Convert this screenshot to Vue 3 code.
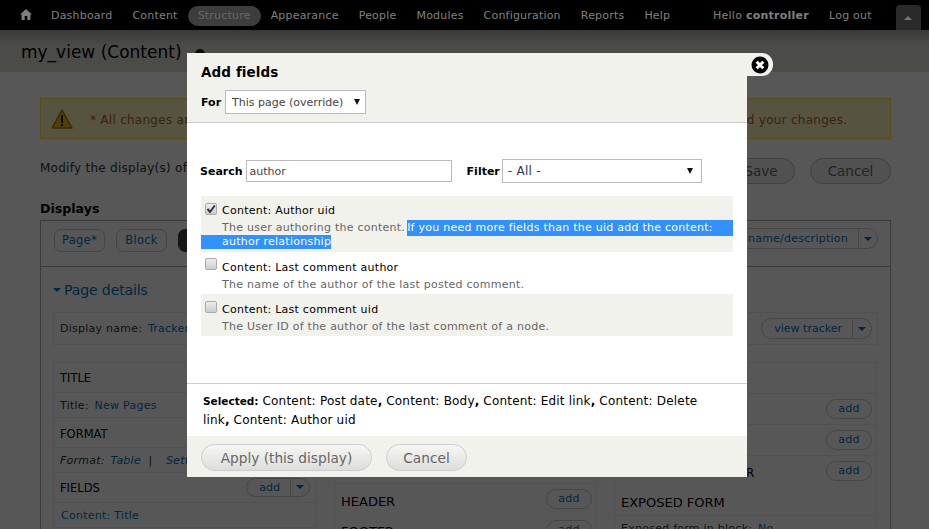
<script setup>
const navItems = [
  { label: 'Dashboard' },
  { label: 'Content' },
  { label: 'Structure', active: true },
  { label: 'Appearance' },
  { label: 'People' },
  { label: 'Modules' },
  { label: 'Configuration' },
  { label: 'Reports' },
  { label: 'Help' }
]

const otherFields = [
  { name: 'Content: Last comment author', desc: 'The name of the author of the last posted comment.' },
  { name: 'Content: Last comment uid', desc: 'The User ID of the author of the last comment of a node.', odd: true }
]
</script>

<template>
  <div class="page">
    <div class="toolbar">
      <svg class="home" width="12" height="11" viewBox="0 0 12 11">
        <path d="M6 0 L12 5.5 L10.4 5.5 L10.4 11 L7.3 11 L7.3 7 L4.7 7 L4.7 11 L1.6 11 L1.6 5.5 L0 5.5 Z" fill="#808080" />
      </svg>
      <nav class="nav">
        <a v-for="item in navItems" :key="item.label" :class="{ active: item.active }">{{ item.label }}</a>
      </nav>
      <div class="user">
        <span>Hello <b>controller</b></span>
        <span>Log out</span>
      </div>
      <div class="tray"><i></i></div>
    </div>

    <header class="head">
      <h1>my_view (Content)</h1>
      <span class="gear"></span>
    </header>

    <main class="content">
      <div class="warning">
        <svg width="22" height="20" viewBox="0 0 22 20">
          <path d="M11 1 L21 19 L1 19 Z" fill="#e8b820" stroke="#a88000" stroke-width="1.5" stroke-linejoin="round" />
          <rect x="10" y="6" width="2" height="8" fill="#222" />
          <rect x="10" y="15" width="2" height="2" fill="#222" />
        </svg>
        <span class="warning-text">* All changes are stored temporarily. Click Save to make your changes permanent. Click Cancel to discard your changes.</span>
      </div>

      <div class="actions">
        <span class="modify">Modify the display(s) of your view below or add new displays.</span>
        <div class="actions-btns">
          <span class="btn save">Save</span>
          <span class="btn cancel">Cancel</span>
        </div>
      </div>

      <h2>Displays</h2>
      <section class="displays">
        <div class="tabs">
          <a class="tab">Page*</a>
          <a class="tab">Block</a>
          <a class="tab dark">Tracker</a>
          <span class="spacer"></span>
          <span class="drop top-drop">edit view name/description<i class="sep"></i><i class="caret"></i></span>
        </div>
        <div class="details">
          <div class="details-title"><i class="caret big"></i>Page details</div>
          <div class="name-row">
            <span>Display name: <a>Tracker</a></span>
            <span class="drop">view tracker<i class="sep"></i><i class="caret"></i></span>
          </div>
          <div class="cols">
            <div class="col">
              <div class="row-h">TITLE</div>
              <div class="row-v">Title: <a>New Pages</a></div>
              <div class="row-h low">FORMAT</div>
              <div class="row-v"><em>Format: <a>Table</a> &nbsp;|&nbsp; <a class="settings">Settings</a></em></div>
              <div class="row-h flexed low">FIELDS<span class="drop small">add<i class="sep"></i><i class="caret"></i></span></div>
              <div class="row-v plain"><a>Content: Title</a></div>
            </div>
            <div class="col big-heads">
              <div class="row-h">PAGE SETTINGS</div>
              <div class="row-v">Path: <a>/tracker</a></div>
              <div class="row-v">Menu: <a>No menu</a></div>
              <div class="row-v">Access: <a>Permission</a></div>
              <div class="row-h flexed tall">HEADER<span class="pill">add</span></div>
              <div class="row-h flexed">FOOTER<span class="pill">add</span></div>
            </div>
            <div class="col big-heads">
              <div class="row-h adv">ADVANCED</div>
              <div class="row-h flexed line"><span class="nr">CONTEXTUAL FILTERS</span><span class="pill">add</span></div>
              <div class="row-h flexed line"><span class="nr">RELATIONSHIPS</span><span class="pill">add</span></div>
              <div class="row-h flexed line"><span class="nr">NO RESULTS BEHAVIOR</span><span class="pill">add</span></div>
              <div class="row-h exposed">EXPOSED FORM</div>
              <div class="row-v">Exposed form in block: <a>No</a></div>
            </div>
          </div>
        </div>
      </section>
    </main>

    <div class="overlay"></div>

    <div class="modal">
      <div class="close-tab">
        <svg width="18" height="18" viewBox="0 0 18 18">
          <circle cx="9" cy="9" r="8.5" fill="#000" />
          <path d="M5.7 5.7 L12.3 12.3 M12.3 5.7 L5.7 12.3" stroke="#fff" stroke-width="3" />
        </svg>
      </div>

      <div class="m-head">
        <h3>Add fields</h3>
        <div class="for-row">
          <b>For</b>
          <div class="select for-select">This page (override)<i class="tri"></i></div>
        </div>
      </div>

      <div class="m-body">
        <div class="search-row">
          <b>Search</b>
          <div class="input">author</div>
          <b class="filter-label">Filter</b>
          <div class="select filter-select">- All -<i class="tri"></i></div>
        </div>

        <div class="fields">
          <div class="field odd first-field">
            <div class="field-name"><span class="check on">
              <svg width="10" height="10" viewBox="0 0 10 10"><path d="M1.5 5 L4 8 L8.8 1.5" fill="none" stroke="#333" stroke-width="2" /></svg>
            </span>Content: Author uid</div>
            <div class="desc line-one">
              <span class="desc-text">The user authoring the content.</span>
              <span class="sel grow">If you need more fields than the uid add the content:</span>
            </div>
            <div class="desc line-two"><span class="sel">author relationship</span></div>
          </div>
          <div v-for="f in otherFields" :key="f.name" class="field" :class="{ odd: f.odd }">
            <div class="field-name"><span class="check"></span>{{ f.name }}</div>
            <div class="desc"><span class="desc-text">{{ f.desc }}</span></div>
          </div>
        </div>
      </div>

      <div class="selected">
        <b>Selected:</b> Content: Post date<b>,</b> Content: Body<b>,</b> Content: Edit link<b>,</b> Content: Delete link<b>,</b> Content: Author uid
      </div>

      <div class="m-foot">
        <span class="m-btn apply">Apply (this display)</span>
        <span class="m-btn m-cancel">Cancel</span>
      </div>
    </div>
  </div>
</template>

<style>
html, body {
  margin: 0;
  height: 100%;
  overflow: hidden;
  background: #fff;
}
</style>

<style scoped>
.page {
  position: relative;
  width: 929px;
  height: 529px;
  overflow: hidden;
  font-family: "DejaVu Sans", sans-serif;
  font-size: 11px;
  letter-spacing: 0.25px;
  color: #333;
  background: #fff;
}
b { letter-spacing: 0; }

.toolbar {
  position: relative;
  z-index: 1;
  height: 30px;
  background: #000;
  display: flex;
  align-items: center;
  padding-left: 20px;
  color: #808080;
  letter-spacing: 0.2px;
}
.home { margin-top: -1px; }
.nav { display: flex; align-items: center; margin-left: 9px; padding-top: 1px; }
.nav a { padding: 3px 10px 4px; line-height: 13px; }
.nav a.active {
  background: #3d3d3d;
  border-radius: 10px;
  color: #686868;
}
.user {
  position: absolute;
  left: 713px;
  top: 9px;
  display: flex;
  gap: 20px;
  letter-spacing: 0.25px;
}
.user b { letter-spacing: 0.25px; }
.tray {
  position: absolute;
  left: 896px;
  top: 5px;
  width: 25px;
  height: 25px;
  background: #2a2a2a;
  border-radius: 4px 4px 0 0;
}
.tray i {
  position: absolute;
  left: 8px;
  top: 11px;
  border: 4px solid transparent;
  border-top: 0;
  border-bottom: 4px solid #777;
}

.head {
  box-sizing: border-box;
  height: 42px;
  padding: 2px 0 0 21px;
  background: linear-gradient(#aaa, #dcdcd0 40%);
  display: flex;
  align-items: center;
}
.head h1 {
  margin: 0;
  font-size: 17px;
  font-weight: normal;
  letter-spacing: 0;
  color: #000;
}
.gear {
  position: absolute;
  left: 195px;
  top: 49px;
  width: 10px;
  height: 10px;
  border-radius: 50%;
  background: #222;
}

.content {
  padding: 26px 38px 0 40px;
  font-size: 12px;
  letter-spacing: 0.27px;
}
.warning {
  height: 39px;
  border: 1px solid #ffe040;
  background: #fbf6bb;
  display: flex;
  align-items: center;
  gap: 17px;
  padding-left: 10px;
  color: #a86030;
}
.warning-text { padding-top: 2px; }
.actions {
  display: flex;
  justify-content: space-between;
  align-items: center;
  margin-top: 19px;
  height: 26px;
}
.modify { margin-top: -6px; }
.actions-btns { display: flex; gap: 15px; }
.btn {
  box-sizing: border-box;
  height: 26px;
  line-height: 25px;
  border: 1px solid #bbb;
  border-radius: 13px;
  text-align: center;
  font-size: 13.5px;
  letter-spacing: 0;
  background: #eee;
  color: #666;
}
.save { width: 68px; }
.cancel { width: 81px; }

h2 {
  margin: 16px 0 3px;
  font-size: 12.6px;
  letter-spacing: 0;
  color: #000;
  line-height: 17px;
}
.displays { border: 1px solid #aaa; height: 320px; font-size: 11px; letter-spacing: 0.25px; }
.tabs {
  box-sizing: border-box;
  height: 46px;
  border-bottom: 1px solid #aaa;
  display: flex;
  align-items: flex-start;
  padding: 8px 12px 0 13px;
  gap: 11px;
}
.tab {
  box-sizing: border-box;
  height: 23px;
  width: 51px;
  line-height: 21px;
  border: 1px solid #ccc;
  border-radius: 7px;
  color: #0074bd;
  text-align: center;
  font-size: 11.5px;
}
.tab.dark { width: 70px; background: #444; color: #fff; border-color: #444; }
.spacer { flex: 1; }
.drop {
  box-sizing: border-box;
  border: 1px solid #ccc;
  border-radius: 11px;
  height: 21px;
  padding: 0 5px 0 12px;
  color: #0074bd;
  display: inline-flex;
  align-items: center;
}
.top-drop { margin-top: -1px; }
.sep {
  width: 1px;
  height: 100%;
  background: #ccc;
  margin: 0 5px 0 10px;
}
.caret {
  display: inline-block;
  border: 4px solid transparent;
  border-bottom: 0;
  border-top: 4px solid #0074bd;
}
.details { padding: 0 12px; }
.details-title {
  color: #0074bd;
  font-size: 14px;
  letter-spacing: -0.1px;
  height: 45px;
  line-height: 46px;
}
.caret.big { margin: 0 3px 2px 0; vertical-align: middle; }
.name-row {
  box-sizing: border-box;
  height: 33px;
  border: 1px solid #eee;
  display: flex;
  align-items: center;
  justify-content: space-between;
  padding: 0 5px 0 6px;
}
.name-row .drop { letter-spacing: 0; }
.name-row a, .row-v a { color: #0074bd; margin-left: 2px; }
.row-v a.settings { margin-left: 6px; }
.plain a { margin-left: 1px; }
.cols {
  display: grid;
  grid-template-columns: 264px 263px 263px;
  column-gap: 17px;
  margin-top: 17px;
}
.col { box-sizing: border-box; border: 1px solid #eee; height: 300px; }
.row-h {
  box-sizing: border-box;
  color: #000;
  font-size: 11.5px;
  letter-spacing: 0;
  height: 29px;
  line-height: 31px;
  padding-left: 6px;
}
.row-h.low { line-height: 33px; }
.row-h.flexed.low { padding-top: 2px; }
.big-heads .row-h { font-size: 13px; height: 31px; line-height: 31px; }
.big-heads .adv { height: 30px; }
.big-heads .exposed { height: 29px; line-height: 33px; }
.row-v {
  box-sizing: border-box;
  height: 26px;
  line-height: 26px;
  padding-left: 6px;
  border-top: 1px solid #eee;
  border-bottom: 1px solid #eee;
}
.flexed {
  display: flex;
  justify-content: space-between;
  align-items: center;
  padding-right: 4px;
}
.big-heads .flexed { padding-top: 4px; }
.big-heads .tall { margin-top: 11px; border-top: 1px solid #eee; }
.line { border-top: 1px solid #eee; }
.nr { font-size: 11.4px; }
.pill {
  box-sizing: border-box;
  width: 46px;
  height: 20px;
  line-height: 18px;
  margin-top: -4px;
  text-align: center;
  border: 1px solid #ccc;
  border-radius: 10px;
  color: #0074bd;
  font-size: 11px;
  letter-spacing: 0.25px;
}
.drop.small {
  margin-right: 2px;
  margin-top: -3px;
  padding: 0 5px 0 12px;
  font-size: 11px;
  letter-spacing: 0;
  height: 19px;
}

.overlay {
  position: absolute;
  inset: 0;
  background: rgba(0, 0, 0, 0.66);
}

.modal {
  position: absolute;
  z-index: 2;
  left: 187px;
  top: 53px;
  width: 560px;
  height: 424px;
  background: #f2f2ed;
  display: flex;
  flex-direction: column;
  color: #000;
}
.close-tab {
  position: absolute;
  left: 560px;
  top: 0;
  width: 26px;
  height: 23px;
  background: #f2f2ed;
  border-radius: 0 11px 11px 0;
  display: flex;
  align-items: center;
}
.close-tab svg { margin-left: 4px; }
.m-head {
  height: 69px;
  padding-left: 14px;
  border-bottom: 1px solid #ccc;
}
.m-head h3 {
  margin: 0;
  padding-top: 10px;
  font-size: 13.5px;
  letter-spacing: 0.1px;
  line-height: 18px;
}
.for-row {
  display: flex;
  align-items: center;
  gap: 4px;
  margin-top: 9px;
}
.select {
  box-sizing: border-box;
  background: #fff;
  border: 1px solid #bbb;
  display: flex;
  align-items: center;
  justify-content: space-between;
  color: #444;
  white-space: nowrap;
}
.for-select { width: 141px; height: 24px; padding: 0 5px 0 6px; letter-spacing: 0; }
.tri {
  display: inline-block;
  border: 3.5px solid transparent;
  border-bottom: 0;
  border-top: 6px solid #111;
}
.m-body {
  height: 260px;
  background: #fff;
  padding: 0 14px;
  box-sizing: border-box;
}
.search-row {
  display: flex;
  align-items: center;
  margin-top: 36px;
  height: 24px;
  margin-left: -1px;
}
.input {
  box-sizing: border-box;
  width: 206px;
  height: 22px;
  line-height: 22px;
  border: 1px solid #bbb;
  padding-left: 3px;
  margin-left: 3px;
  color: #444;
  letter-spacing: 0;
}
.filter-label { margin-left: 15px; margin-right: 2px; }
.filter-select { width: 200px; height: 24px; padding: 0 8px 0 5px; color: #335; font-size: 12px; }
.fields { margin-top: 13px; }
.field { height: 42px; box-sizing: border-box; padding-top: 8px; }
.field.odd { background: #f2f2ec; }
.first-field { height: 56px; }
.field.first-field { padding-top: 7px; }
.field-name { position: relative; padding-left: 21px; line-height: 16px; }
.check {
  position: absolute;
  left: 4px;
  top: -2px;
  box-sizing: border-box;
  width: 12px;
  height: 12px;
  border: 1px solid #aaa;
  border-radius: 2px;
  background: linear-gradient(#eee, #ccc);
  display: flex;
  align-items: center;
  justify-content: center;
}
.field.odd .check { top: -1px; }
.field.first-field .check { top: 0; }
.desc { line-height: 16px; padding-left: 21px; margin-top: 1px; color: #666; display: flex; white-space: nowrap; }
.line-one { margin-bottom: -1px; }
.line-one .desc-text { margin-right: 2px; }
.sel { background: #3390ff; color: #fff; white-space: nowrap; }
.grow { flex: 1; }
.line-two { padding-left: 0; margin-top: 0; line-height: 14px; }
.line-two .sel { padding-left: 21px; }

.selected {
  height: 53px;
  box-sizing: border-box;
  background: #fff;
  border-top: 1px solid #ccc;
  padding: 8px 30px 0 16px;
  line-height: 19px;
  font-size: 12px;
  letter-spacing: 0.2px;
}
.selected b:first-child { font-size: 10.5px; }
.m-foot {
  flex: 1;
  display: flex;
  align-items: center;
  gap: 14px;
  padding: 2px 14px 0;
}
.m-btn {
  box-sizing: border-box;
  height: 27px;
  line-height: 26px;
  border: 1px solid #ccc;
  border-radius: 14px;
  text-align: center;
  font-size: 13.7px;
  letter-spacing: 0;
  color: #666;
  background: linear-gradient(#f6f6f3, #dddddb);
}
.apply { width: 171px; }
.m-cancel { width: 81px; }
</style>
